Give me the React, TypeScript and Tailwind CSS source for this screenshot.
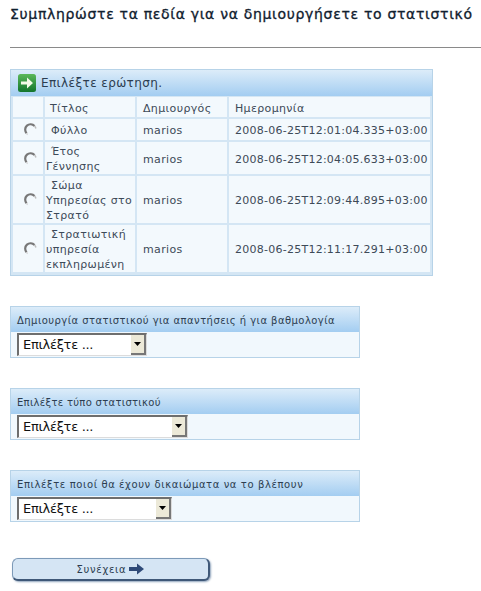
import React from "react";

const rows = [
  { title: <><span className="pl-[5px]">Φύλλο</span></>, date: "2008-06-25T12:01:04.335+03:00", h: "h-[21px]" },
  { title: <><span className="block pl-[5px]">Έτος</span>Γέννησης</>, date: "2008-06-25T12:04:05.633+03:00", h: "h-[32px]" },
  { title: <><span className="block pl-[5px]">Σώμα</span>Υπηρεσίας στο Στρατό</>, date: "2008-06-25T12:09:44.895+03:00", h: "h-[47px]" },
  { title: <><span className="block pl-[5px]">Στρατιωτική</span>υπηρεσία εκπληρωμένη</>, date: "2008-06-25T12:11:17.291+03:00", h: "h-[47px]" },
];

const cell = "bg-[#f3f9fd] flex items-center pt-[2px] text-[11px] leading-[15px] text-[#3d4a58]";

const Radio = () => (
  <svg width="14" height="14" viewBox="0 0 14 14" fill="none" className="ml-[5px] -mt-[1px]">
    <path d="M2.6 10.2 A5 5 0 0 1 10.5 3" stroke="#777" strokeWidth="2.2" />
    <path d="M10.5 3 A5 5 0 0 1 11.9 5.5" stroke="#bdbdbd" strokeWidth="1.5" />
    <path d="M2.6 10.2 A5 5 0 0 0 3.6 11.6" stroke="#d0d0d0" strokeWidth="1.5" />
  </svg>
);

const Select = ({ width }: { width: string }) => (
  <div className={`${width} h-[23px] flex bg-white border-t-2 border-l-2 border-t-[#6e6e6e] border-l-[#6e6e6e] border-b border-r border-b-[#dcdcdc] border-r-[#dcdcdc]`}>
    <span className="flex-1 pl-[4px] text-[13px] tracking-[-0.3px] leading-[20px] text-[#111]">Επιλέξτε ...</span>
    <span className="w-[15px] h-[20px] flex items-center justify-center bg-[#ece9d8] border-r-2 border-b-2 border-r-[#777] border-b-[#777]">
      <svg width="7" height="4" viewBox="0 0 7 4"><path d="M0 0H7L3.5 4Z" fill="#000" /></svg>
    </span>
  </div>
);

const Panel = ({ label, width, tracking }: { label: string; width: string; tracking: string }) => (
  <section className="w-[350px] h-[52px] border border-[#b7d3e8] bg-[#f1f8fd] flex flex-col">
    <div className={`h-[25px] bg-gradient-to-b from-[#dcecf9] to-[#a3cdf1] pl-[6px] pt-px flex items-center whitespace-nowrap text-[10px] text-[#2c3d50] ${tracking}`}>
      {label}
    </div>
    <div className="pl-[6px] pt-px">
      <Select width={width} />
    </div>
  </section>
);

export default function App() {
  return (
    <div className="w-[481px] h-[591px] bg-white overflow-hidden pl-[10px] font-['DejaVu_Sans',sans-serif]">
      <h1 className="pt-[6px] h-[47px] text-[14px] leading-[16px] font-normal tracking-[0.68px] text-[#10202e] [-webkit-text-stroke:0.3px_#10202e] whitespace-nowrap">
        Συμπληρώστε τα πεδία για να δημιουργήσετε το στατιστικό
      </h1>
      <div className="h-px bg-[#8a8a8a]" />

      <section className="mt-[21px] w-[423px] h-[207px] border border-[#b7d3e8] bg-[#d4e6f4] flex flex-col">
        <div className="h-[26px] shrink-0 bg-gradient-to-b from-[#dcecf9] to-[#a3cdf1] pl-[7px] flex items-center gap-[5px] text-[12px] tracking-[0.4px] text-[#2c3d50]">
          <svg width="18" height="18" viewBox="0 0 18 18">
            <defs>
              <linearGradient id="greenIcon" x1="0" y1="0" x2="0" y2="1">
                <stop offset="0" stopColor="#5cb85a" />
                <stop offset="1" stopColor="#12752c" />
              </linearGradient>
            </defs>
            <rect width="18" height="18" rx="2.5" fill="url(#greenIcon)" />
            <path d="M3 7.5H9V3.5L15 9L9 14.5V10.5H3Z" fill="#f4fbe8" />
          </svg>
          Επιλέξτε ερώτηση.
        </div>
        <div className="mt-px mx-[2px] grid grid-cols-[30px_90px_90px_201px] gap-[2px]">
          <div className={`${cell} h-[20px]`} />
          <div className={`${cell} h-[20px] pl-[5px] tracking-[0.35px]`}>Τίτλος</div>
          <div className={`${cell} h-[20px] pl-[6px] tracking-[0.35px]`}>Δημιουργός</div>
          <div className={`${cell} h-[20px] pl-[6px] tracking-[0.35px]`}>Ημερομηνία</div>
          {rows.map((r) => (
            <React.Fragment key={r.date}>
              <div className={`${cell} ${r.h} justify-center`}><Radio /></div>
              <div className={`${cell} ${r.h} pl-[1px] tracking-[0.35px]`}><div>{r.title}</div></div>
              <div className={`${cell} ${r.h} pl-[6px] tracking-[0.35px]`}>marios</div>
              <div className={`${cell} ${r.h} pl-[6px] whitespace-nowrap tracking-[0.25px]`}>{r.date}</div>
            </React.Fragment>
          ))}
        </div>
      </section>

      <div className="mt-[30px] flex flex-col gap-[30px]">
        <Panel label="Δημιουργία στατιστικού για απαντήσεις ή για βαθμολογία" width="w-[130px]" tracking="tracking-[0.45px]" />
        <Panel label="Επιλέξτε τύπο στατιστικού" width="w-[171px]" tracking="tracking-[0.3px]" />
        <Panel label="Επιλέξτε ποιοί θα έχουν δικαιώματα να το βλέπουν" width="w-[155px]" tracking="tracking-[0.6px]" />
      </div>

      <button className="mt-[36px] ml-[2px] w-[198px] h-[23px] flex items-center justify-center gap-[3px] rounded-[6px] border border-[#7d9ab8] border-r-2 border-b-2 border-r-[#3f5878] border-b-[#3f5878] shadow-[1px_1px_2px_#8fa3bb] bg-[#d5e5f4] text-[10px] tracking-[0.7px] text-[#2c3d50]">
        Συνέχεια
        <svg width="15" height="12" viewBox="0 0 15 12">
          <path d="M0 4H8V0.5L15 6L8 11.5V8H0Z" fill="#2f4a78" />
        </svg>
      </button>
    </div>
  );
}
